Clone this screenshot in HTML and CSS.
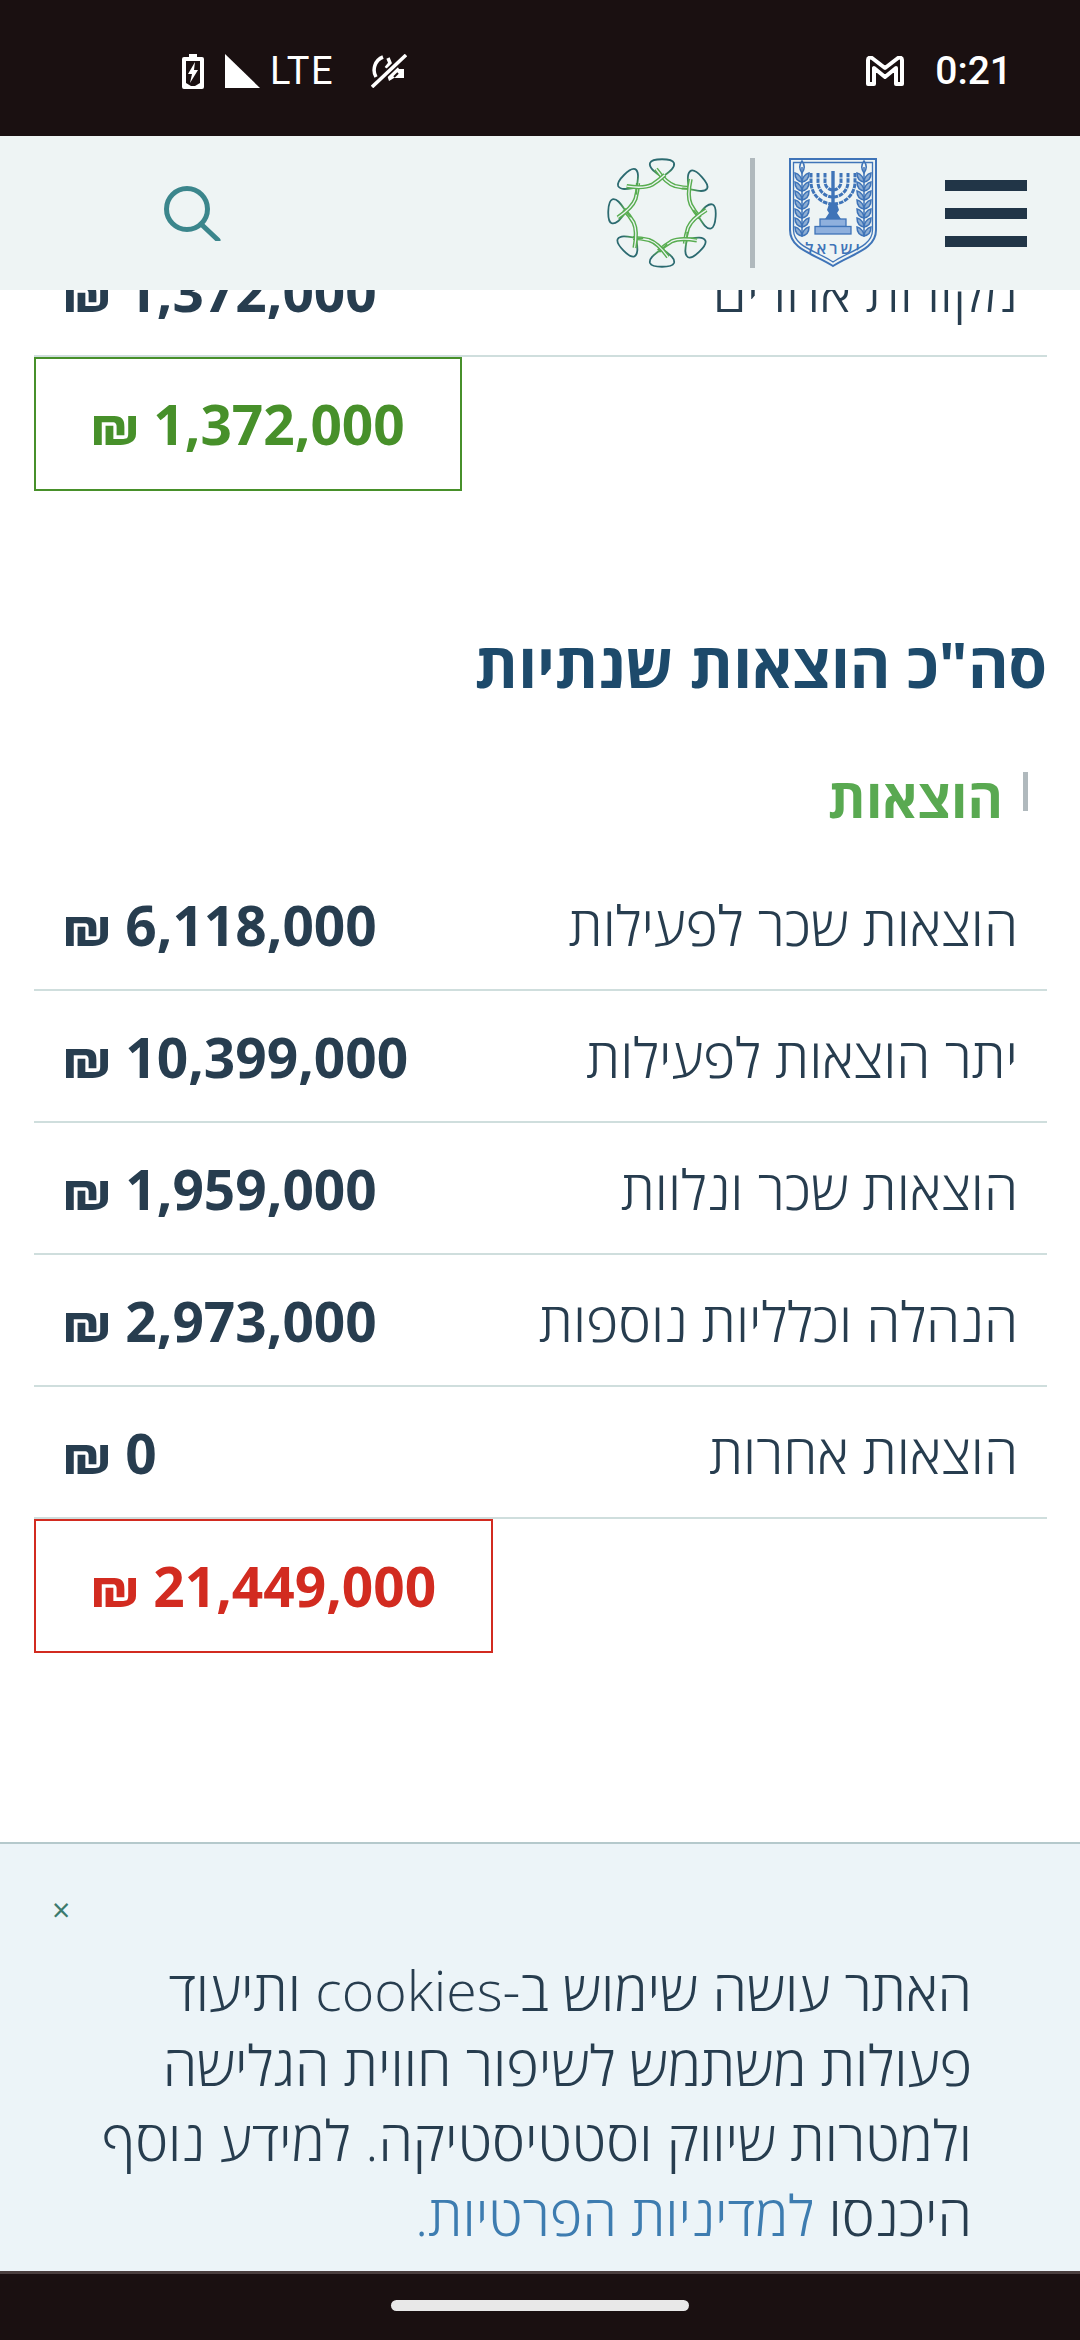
FILE: index.html
```html
<!DOCTYPE html>
<html lang="he" dir="rtl">
<head>
<meta charset="utf-8">
<title>סה"כ הוצאות שנתיות</title>
<link rel="stylesheet" href="styles.css">
</head>
<body>
<div class="phone">
  <div class="status" dir="ltr">
    <svg class="ic-batt" viewBox="0 0 22 35" width="22" height="35"><path fill="#fff" d="M7 0h8v3h5a2 2 0 0 1 2 2v28a2 2 0 0 1-2 2H2a2 2 0 0 1-2-2V5a2 2 0 0 1 2-2h5z"/><path fill="#1a1011" d="M4 7h14v22l-5 3H9l-5-3z"/><path fill="#fff" d="M13 8l-7 12h4l-2 9 8-13h-4z"/></svg>
    <svg class="ic-sig" viewBox="0 0 35 34" width="35" height="34"><path fill="#fff" d="M0 0L35 34H0z"/></svg>
    <span class="lte">LTE</span>
    <svg class="ic-off" viewBox="0 0 36 34" width="36" height="34"><g fill="none" stroke="#fff" stroke-width="3.500"><path d="M12 3A14 14 0 0 0 5 23"/><path d="M17 4l2 5-4 5"/></g><path fill="#fff" d="M19 16l6-6 3 5h5v9H23l-5 3-2-6z"/><path stroke="#1a1011" stroke-width="7" d="M1 33L35 1"/><path stroke="#fff" stroke-width="3.500" d="M1 33L35 1"/><path stroke="#1a1011" stroke-width="2" d="M27 19l-4 4"/></svg>
    <span class="spacer"></span>
    <svg class="ic-m" viewBox="0 0 38 30" width="38" height="30"><path fill="none" stroke="#fff" stroke-width="4" stroke-linejoin="round" d="M2 4c0-2 2-3 4-2l13 10L32 2c2-1 4 0 4 2v24h-6V12L19 21 8 12v16H2z"/></svg>
    <span class="time">0:21</span>
  </div>

  <header class="topbar" dir="ltr">
    <svg class="ic-search" viewBox="0 0 57 55" width="57" height="55"><circle cx="23" cy="23" r="20.500" fill="none" stroke="#3b868c" stroke-width="5"/><path d="M37 38l17 16" stroke="#3b868c" stroke-width="5" stroke-linecap="round"/></svg>
    <span class="spacer"></span>
    <svg class="logo-ring" viewBox="-55 -56 110 112" width="110" height="112">
      <defs>
        <radialGradient id="rg" gradientUnits="userSpaceOnUse" cx="0" cy="0" r="54">
          <stop offset="0.68" stop-color="#58ad50"/>
          <stop offset="0.84" stop-color="#2b6a70"/>
        </radialGradient>
        <g id="seg" fill="none">
          <path stroke="url(#rg)" stroke-width="1.800" d="M5 -31C1 -37 -14 -43 -12 -50C-10 -55 10 -55 12 -50C14 -43 -1 -37 -5 -31"/>
          <path stroke="#58ad50" stroke-width="4.200" d="M-6 -44Q4 -30 13 -27Q21 -25 29 -25"/>
          <path stroke="#eef4f4" stroke-width="1.300" d="M-6 -44Q4 -30 13 -27Q21 -25 29 -25"/>
        </g>
      </defs>
      <use href="#seg" transform="rotate(0)"/>
      <use href="#seg" transform="rotate(48)"/>
      <use href="#seg" transform="rotate(94)"/>
      <use href="#seg" transform="rotate(136)"/>
      <use href="#seg" transform="rotate(180)"/>
      <use href="#seg" transform="rotate(226)"/>
      <use href="#seg" transform="rotate(272)"/>
      <use href="#seg" transform="rotate(315)"/>
    </svg>
    <span class="divider"></span>
    <svg class="logo-emblem" viewBox="0 0 88 110" width="88" height="110">
      <defs>
        <path id="lf" fill="#3f74b8" fill-opacity="0.55" stroke="#3f74b8" stroke-width="1.500" d="M0 0C-5-1-7-5-7-9-3-8 0-4 0 0zM0 0C5-1 7-5 7-9 3-8 0-4 0 0z"/>
        <g id="br">
          <path d="M0 9V78" stroke="#3f74b8" stroke-width="1.500"/>
          <path d="M0 3C-3 7-3 11 0 15 3 11 3 7 0 3z" fill="none" stroke="#3f74b8" stroke-width="1.500"/>
          <use href="#lf" y="24"/><use href="#lf" y="33"/><use href="#lf" y="42"/><use href="#lf" y="51"/><use href="#lf" y="60"/><use href="#lf" y="69"/><use href="#lf" y="78"/>
        </g>
      </defs>
      <path d="M1 1H87V72C87 92 62 96 44 108 26 96 1 92 1 72z" fill="none" stroke="#3f74b8" stroke-width="2"/>
      <path d="M4.500 4.500H83.500V72C83.500 89 60 93 44 104 28 93 4.500 89 4.500 72z" fill="none" stroke="#3f74b8" stroke-width="1.300"/>
      <use href="#br" x="13"/><use href="#br" x="75"/>
      <g fill="none" stroke="#3f74b8" stroke-width="3" stroke-dasharray="4.500 1">
        <path d="M22 15V24A22 22 0 0 0 66 24V15"/>
        <path d="M29 15V24A15 15 0 0 0 59 24V15"/>
        <path d="M36 15V24A8 8 0 0 0 52 24V15"/>
      </g>
      <path d="M44 13V48" stroke="#3f74b8" stroke-width="3.400"/>
      <path fill="#3f74b8" d="M40 46h8l2 6-2 3 4 6H36l4-6-2-3z"/>
      <g fill="#8fb0dd" stroke="#3f74b8" stroke-width="1.300">
        <rect x="31" y="61" width="26" height="7.500"/>
        <rect x="26" y="68.500" width="36" height="7.500"/>
      </g>
      <text class="emblem-text" x="45" y="96" text-anchor="middle">ישראל</text>
    </svg>
    <span class="burger"><i></i><i></i><i></i></span>
  </header>

  <main class="content">
    <section class="scrolled">
      <div class="row"><span class="label">מקורות אחרים</span><span class="amount">1,372,000 <span class="ils">₪</span></span></div>
      <div class="total total-green">1,372,000 <span class="ils">₪</span></div>

      <h2 class="title">סה"כ הוצאות שנתיות</h2>
      <h3 class="sub"><span class="sub-bar"></span><span>הוצאות</span></h3>

      <div class="row"><span class="label">הוצאות שכר לפעילות</span><span class="amount">6,118,000 <span class="ils">₪</span></span></div>
      <div class="row"><span class="label">יתר הוצאות לפעילות</span><span class="amount">10,399,000 <span class="ils">₪</span></span></div>
      <div class="row"><span class="label">הוצאות שכר ונלוות</span><span class="amount">1,959,000 <span class="ils">₪</span></span></div>
      <div class="row"><span class="label">הנהלה וכלליות נוספות</span><span class="amount">2,973,000 <span class="ils">₪</span></span></div>
      <div class="row"><span class="label">הוצאות אחרות</span><span class="amount">0 <span class="ils">₪</span></span></div>
      <div class="total total-red">21,449,000 <span class="ils">₪</span></div>
    </section>

    <aside class="cookie">
      <div class="close" dir="ltr">×</div>
      <p class="cookie-text">האתר עושה שימוש ב-cookies ותיעוד פעולות משתמש לשיפור חווית הגלישה ולמטרות שיווק וסטטיסטיקה. למידע נוסף היכנסו <a class="link">למדיניות הפרטיות.</a></p>
    </aside>
  </main>

  <footer class="navbar"><span class="pill"></span></footer>
</div>
</body>
</html>
```
FILE: styles.css
```css
* { box-sizing: border-box; }
html, body { margin: 0; padding: 0; }
body { font-family: "Open Sans", "Noto Sans", sans-serif; background: #fff; }
.phone { width: 1080px; height: 2340px; display: flex; flex-direction: column; overflow: hidden; }

.status { height: 136px; flex: none; background: #1a1011; display: flex; align-items: center; padding: 6px 68px 0 182px; color: #fff; font-family: Roboto, sans-serif; }
.status svg { flex: none; }
.ic-sig { margin-left: 21px; }
.lte { font-size: 38px; margin-left: 10px; letter-spacing: 1.500px; }
.ic-off { margin-left: 37px; }
.spacer { flex: 1; }
.time { font-size: 39px; margin-left: 31px; font-weight: 500; }

.topbar { position: relative; z-index: 2; height: 154px; flex: none; background: #eef4f4; display: flex; align-items: center; padding: 0 53px 0 164px; }
.logo-ring { flex: none; }
.divider { flex: none; width: 5px; height: 110px; background: #b0b9bd; margin: 0 34px 0 33px; }
.logo-emblem { flex: none; }
.emblem-text { font-family: "Open Sans", sans-serif; font-size: 16px; font-weight: 600; letter-spacing: 3px; fill: #3f74b8; }
.burger { flex: none; width: 82px; margin-left: 68px; display: flex; flex-direction: column; gap: 17px; }
.burger i { display: block; height: 11px; background: #213547; }

.content { position: relative; flex: 1; overflow: hidden; }
.scrolled { margin-top: -65px; padding: 0 33px 0 34px; color: #273d4f; }

.row { height: 132px; display: flex; align-items: center; justify-content: space-between; padding: 0 29px 0 29px; border-bottom: 2px solid #cfdedd; }
.label { font-size: 55px; font-weight: 300; }
.amount { font-size: 55px; font-weight: 700; }
.ils { font-family: Roboto, sans-serif; line-height: 0; }

.total { display: table; font-size: 55px; font-weight: 700; line-height: 130px; padding: 0 55px; margin-right: auto; margin-left: 0; border: 2px solid; }
.total-green { color: #47902a; border-color: #47902a; }
.total-red { color: #d22b20; border-color: #d22b20; }

.title { margin: 133px 0 0; font-size: 62px; line-height: 80px; font-weight: 700; color: #1d4a6b; }
.sub { margin: 63px 19px 32px 0; display: flex; align-items: center; gap: 20px; font-size: 54px; line-height: 60px; font-weight: 700; color: #59a951; }
.sub-bar { width: 5px; height: 39px; margin-top: -12px; background: #b0b9bd; }

.cookie { position: absolute; left: 0; right: 0; bottom: 0; height: 432px; background: #ecf4f8; border-top: 2px solid #b5c9cc; border-bottom: 3px solid #4a3f3f; padding: 38px 108px 0 92px; }
.close { font-size: 32px; line-height: 56px; color: #3c7a6e; text-align: left; margin-left: -40px; }
.cookie-text { margin: 14px 0 0; font-size: 55.500px; line-height: 75px; font-weight: 300; color: #273d4f; }
.link { color: #3d7cb0; }

.navbar { height: 66px; flex: none; background: #1a1011; display: flex; align-items: center; justify-content: center; }
.pill { width: 298px; height: 11px; border-radius: 6px; background: #e8e8e8; margin-top: -4px; }
```
